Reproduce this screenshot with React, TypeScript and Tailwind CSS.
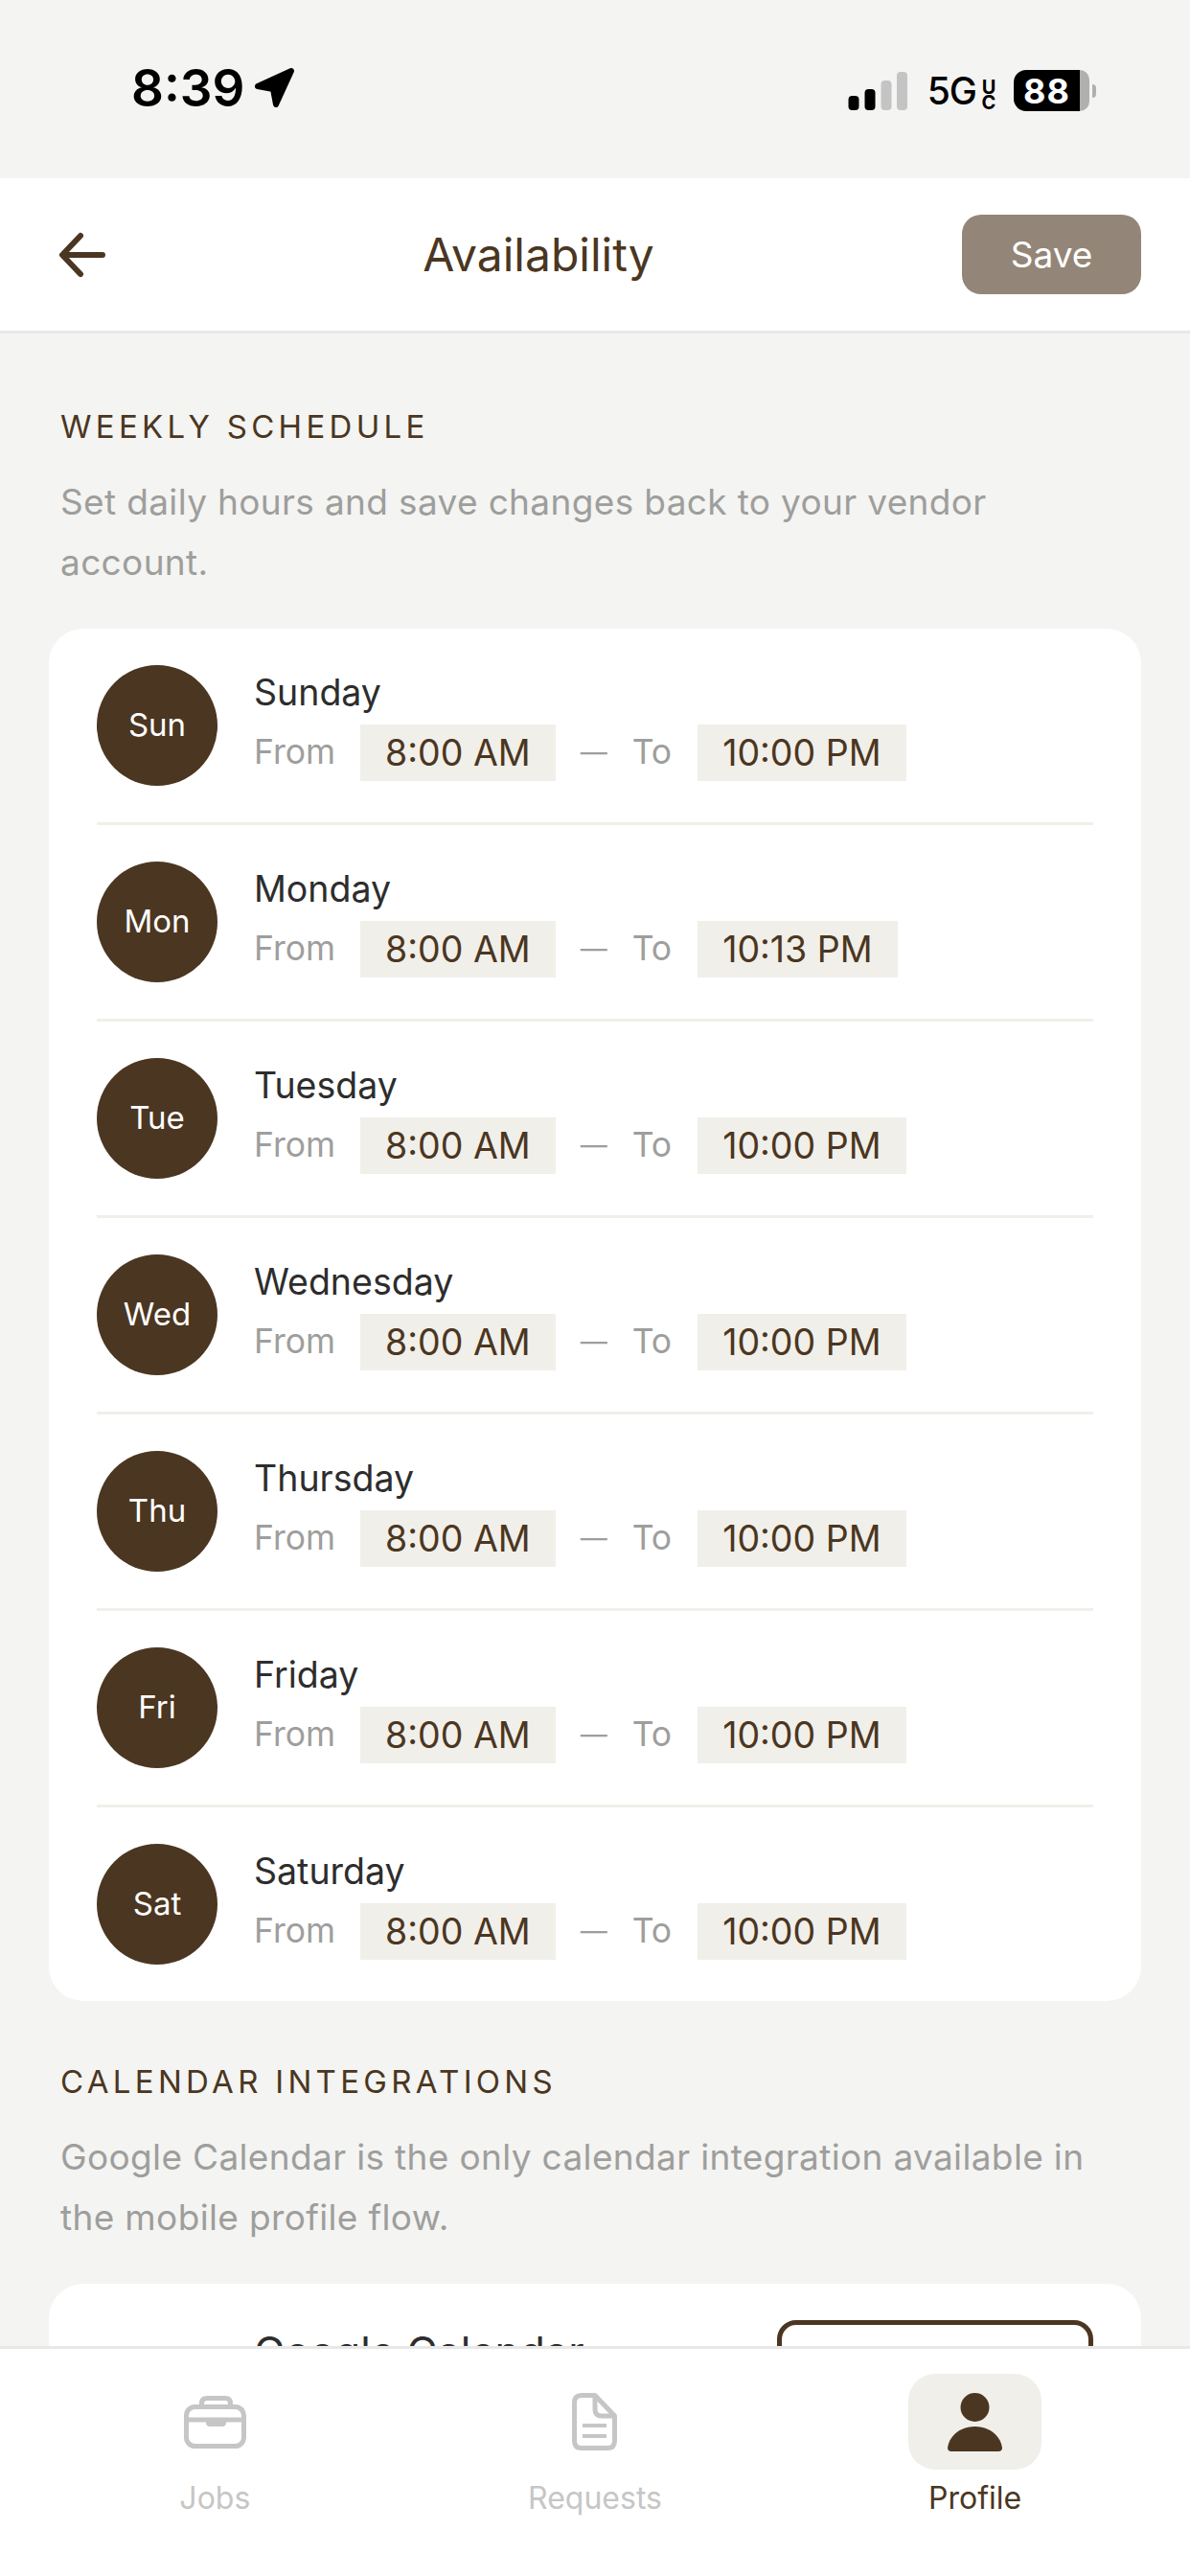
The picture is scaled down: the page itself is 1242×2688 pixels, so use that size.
const font = "font-['Inter','Noto_Sans',sans-serif]";

const days = [
  { short: "Sun", name: "Sunday", to: "10:00 PM" },
  { short: "Mon", name: "Monday", to: "10:13 PM" },
  { short: "Tue", name: "Tuesday", to: "10:00 PM" },
  { short: "Wed", name: "Wednesday", to: "10:00 PM" },
  { short: "Thu", name: "Thursday", to: "10:00 PM" },
  { short: "Fri", name: "Friday", to: "10:00 PM" },
  { short: "Sat", name: "Saturday", to: "10:00 PM" },
];

function StatusBar() {
  return (
    <div className="flex h-[186px] shrink-0 items-start justify-between bg-[#f4f4f2] pt-[65px] pr-[98px] pl-[137px]">
      <div className="flex items-center gap-[10px]">
        <span className="text-[53px] leading-[54px] font-semibold text-black">8:39</span>
        <svg width="44" height="44" viewBox="0 0 44 44">
          <path d="M4 20 L39 4 L23 39 L20 23 Z" fill="#000" stroke="#000" strokeWidth="6" strokeLinejoin="round" />
        </svg>
      </div>
      <div className="flex items-center pt-[8px]">
        <svg width="62" height="40" viewBox="0 0 62 40">
          <rect x="0.5" y="25" width="11" height="15" rx="4" fill="#000" />
          <rect x="17.5" y="18" width="11" height="22" rx="4" fill="#000" />
          <rect x="34.5" y="9" width="11" height="31" rx="4" fill="#c4c4c4" />
          <rect x="51" y="0" width="11" height="40" rx="4" fill="#c4c4c4" />
        </svg>
        <div className="ml-[21px] flex items-center">
          <span className="text-[39px] leading-[40px] font-medium tracking-[-1px] text-black">5G</span>
          <span className="ml-[3px] text-[20px] leading-[20px] font-bold tracking-[-8px] text-black [text-orientation:upright] [writing-mode:vertical-rl]">UC</span>
        </div>
        <div className="ml-[16px] flex items-center">
          <div className="flex h-[43px] w-[69px] items-center justify-center rounded-l-[13px] bg-black text-[36px] font-bold tracking-[1px] text-white">88</div>
          <div className="h-[43px] w-[10px] rounded-r-[10px] bg-[#b0b0ae]" />
          <div className="ml-[3px] h-[14px] w-[4px] rounded-r-full bg-[#b0b0ae]" />
        </div>
      </div>
    </div>
  );
}

function Header() {
  return (
    <div className="flex h-[162px] shrink-0 items-center justify-between border-b-[3px] border-[#e8e8e6] bg-white pr-[51px] pl-[60px]">
      <svg width="50" height="48" viewBox="0 0 50 48" fill="none" stroke="#4b3621" strokeWidth="6" strokeLinecap="round" strokeLinejoin="round">
        <path d="M47 24 H6 M24 4 L5 24 L24 44" />
      </svg>
      <span className="ml-[10px] text-[48px] leading-none text-[#4b3621]">Availability</span>
      <button className="flex h-[83px] w-[187px] items-center justify-center rounded-[20px] bg-[#938678] text-[37px] text-white">Save</button>
    </div>
  );
}

function Section({ title, text }: { title: string; text: string }) {
  return (
    <div className="px-[63px]">
      <div className="text-[33px] leading-[40px] tracking-[4.3px] text-[#4b3621]">{title}</div>
      <p className="mt-[27px] text-[37px] leading-[63px] tracking-[0.35px] text-[#9e9e9c]">{text}</p>
    </div>
  );
}

function DayRow({ day, last }: { day: (typeof days)[number]; last: boolean }) {
  return (
    <div className={last ? "flex items-center gap-[38px] py-[38px]" : "flex items-center gap-[38px] border-b-[3px] border-[#f1efe9] py-[38px]"}>
      <div className="flex h-[126px] w-[126px] shrink-0 items-center justify-center rounded-full bg-[#4b3621] text-[33px] text-white">{day.short}</div>
      <div className="flex flex-col">
        <span className="text-[37.5px] leading-[46px] text-[#2d2d2d]">{day.name}</span>
        <div className="mt-[10px] flex items-center text-[35.5px] text-[#9e9e9c]">
          <span>From</span>
          <span className="ml-[26px] flex h-[59px] items-center bg-[#f1efe9] px-[26px] pt-[2px] text-[37.5px] text-[#4b3621]">8:00 AM</span>
          <span className="ml-[26px] text-[28px]">—</span>
          <span className="ml-[26px]">To</span>
          <span className="ml-[27px] flex h-[59px] items-center bg-[#f1efe9] px-[26px] pt-[2px] text-[37.5px] text-[#4b3621]">{day.to}</span>
        </div>
      </div>
    </div>
  );
}

function TabBar() {
  return (
    <div className="grid h-[240px] shrink-0 grid-cols-3 border-t-[3px] border-[#e8e8e6] bg-white px-[26px] pt-[26px]">
      <div className="flex flex-col items-center">
        <div className="flex h-[100px] items-center justify-center">
          <svg width="65" height="55" viewBox="0 0 65 55" fill="none" stroke="#c6c6c6" strokeWidth="5">
            <rect x="2.5" y="11.5" width="60" height="41" rx="9" />
            <path d="M18.5 11 V8 Q18.5 2.5 24 2.5 H43 Q48.5 2.5 48.5 8 V11" />
            <path d="M3 25 H62" />
            <path d="M23 25 H44 V28 Q44 32 40 32 H27 Q23 32 23 28 Z" fill="#c6c6c6" stroke="none" />
          </svg>
        </div>
        <span className="mt-[10px] text-[32px] leading-[40px] text-[#c6c6c6]">Jobs</span>
      </div>
      <div className="flex flex-col items-center">
        <div className="flex h-[100px] items-center justify-center">
          <svg width="47" height="60" viewBox="0 0 47 60" fill="none" stroke="#c6c6c6" strokeWidth="5" strokeLinejoin="round">
            <path d="M10 2.5 H24 L44.5 24 V50 Q44.5 57.5 37 57.5 H10 Q2.5 57.5 2.5 50 V10 Q2.5 2.5 10 2.5 Z" />
            <path d="M24 2.5 V17 Q24 24 31 24 H44.5" />
            <path d="M11 34 H36 M11 45 H36" strokeWidth="4" />
          </svg>
        </div>
        <span className="mt-[10px] text-[32px] leading-[40px] text-[#c6c6c6]">Requests</span>
      </div>
      <div className="flex flex-col items-center">
        <div className="flex h-[100px] w-[139px] items-center justify-center rounded-[28px] bg-[#f1efe9]">
          <svg width="57" height="61" viewBox="0 0 57 61" fill="#4b3621">
            <circle cx="28.5" cy="15" r="15" />
            <path d="M4 61 H53 Q57 61 57 57 C55 44 43 35 28.5 35 C14 35 2 44 0 57 Q0 61 4 61 Z" />
          </svg>
        </div>
        <span className="mt-[10px] text-[32px] leading-[40px] text-[#4b3621]">Profile</span>
      </div>
    </div>
  );
}

export default function App() {
  return (
    <div className={`flex h-[2688px] w-[1242px] flex-col overflow-hidden bg-[#f4f4f2] ${font}`}>
      <StatusBar />
      <Header />
      <div className="min-h-0 flex-1 overflow-hidden pt-[77px]">
        <Section title="WEEKLY SCHEDULE" text="Set daily hours and save changes back to your vendor account." />
        <div className="mx-[51px] mt-[38px] rounded-[36px] bg-white px-[50px]">
          {days.map((day, i) => (
            <DayRow key={day.short} day={day} last={i === days.length - 1} />
          ))}
        </div>
        <div className="mt-[64px]">
          <Section title="CALENDAR INTEGRATIONS" text="Google Calendar is the only calendar integration available in the mobile profile flow." />
        </div>
        <div className="mx-[51px] mt-[38px] flex items-start justify-between rounded-[36px] bg-white pt-[38px] pr-[50px] pl-[214px]">
          <span className="pt-[10px] text-[43.5px] leading-[46px] text-[#2d2d2d]">Google Calendar</span>
          <div className="h-[96px] w-[330px] rounded-[20px] border-[5px] border-[#4b3621]" />
        </div>
      </div>
      <TabBar />
    </div>
  );
}
